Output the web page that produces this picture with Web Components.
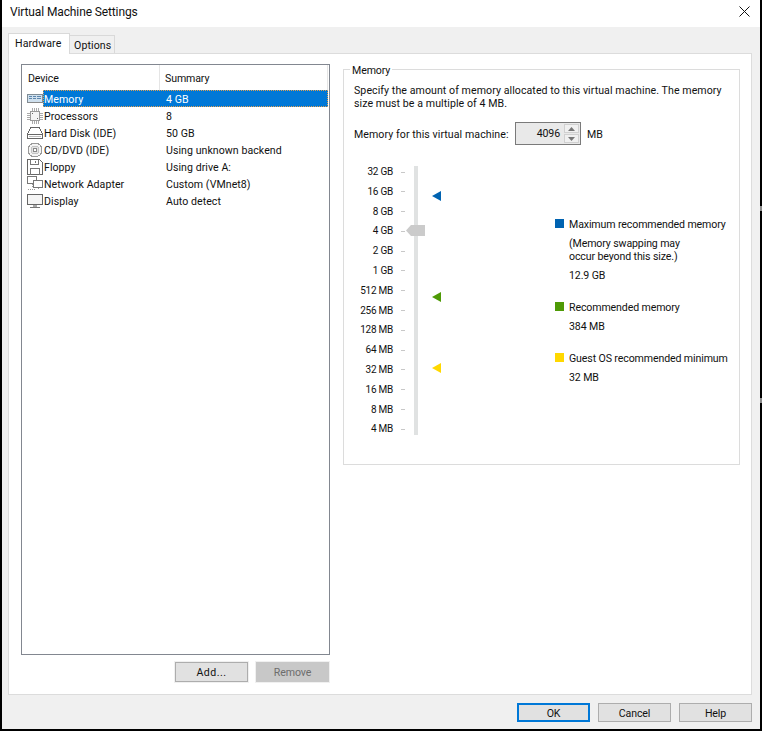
<!DOCTYPE html>
<html lang="en"><head><meta charset="utf-8"><title>Virtual Machine Settings</title>
<style>
html,body{margin:0;padding:0;background:#000;height:731px;overflow:hidden}
body{font:10.6px/13px Roboto,"Open Sans",sans-serif;letter-spacing:-.12px;color:#111;position:relative}
.edge{position:absolute;left:760px;width:2px;height:5px;background:#8a8a8a}
</style></head><body>
<vm-dialog>
  <dialog-tabs slot="tabs"></dialog-tabs>
  <device-pane slot="left"></device-pane>
  <memory-pane slot="right"></memory-pane>
</vm-dialog>
<div class="edge" style="top:206px"></div><div class="edge" style="top:398px"></div>
<script>
function el(name, css, html){
  customElements.define(name, class extends HTMLElement{
    constructor(){super();this.attachShadow({mode:'open'}).innerHTML='<style>'+css+'</style>'+html(this);}
  });
}
el('vm-btn',`
:host{display:block;box-sizing:border-box;width:73px;height:19px;background:#e1e1e1;border:1px solid #adadad;text-align:center;line-height:19px;color:#111}
:host([primary]){border:2px solid #0078d7;line-height:17px}
:host([tall]){height:20px;line-height:20px;outline:1px solid #f0f0f0;width:73px}
:host([wide]){letter-spacing:.5px}
:host([disabled]){background:#c8c8c8;border-color:#c8c8c8;color:#6d6d6d}
`,()=>'<slot></slot>');

el('vm-dialog',`
:host{display:flex;flex-direction:column;box-sizing:border-box;width:758px;height:729px;margin-left:2px;background:#f0f0f0}
.title{height:27px;background:#fff;display:flex;align-items:center;justify-content:space-between;padding:0 10px 2px 8px;box-sizing:border-box;font-size:12px}
.title svg{display:block;margin-top:-3px}
.tabs{height:26px;padding:6px 0 0 6px;box-sizing:border-box;display:flex}
.panel{box-sizing:border-box;width:744px;height:642px;margin-left:6px;background:#fff;border:1px solid #dcdcdc;padding:10px 10px 0 12px;display:flex;gap:13px}
.foot{display:flex;justify-content:flex-end;gap:8px;padding:8px 8px 0 0}
`,()=>`
<div class="title"><span>Virtual Machine Settings</span>
<svg width="11" height="11" viewBox="0 0 11 11"><path d="M.5.5l10 10M10.5.5l-10 10" stroke="#111" stroke-width="1" fill="none"/></svg></div>
<div class="tabs"><slot name="tabs"></slot></div>
<div class="panel"><slot name="left"></slot><slot name="right"></slot></div>
<div class="foot"><vm-btn primary>OK</vm-btn><vm-btn>Cancel</vm-btn><vm-btn>Help</vm-btn></div>`);

el('dialog-tabs',`
:host{display:flex;align-items:flex-end;height:20px;position:relative;z-index:1;letter-spacing:.1px}
.t{box-sizing:border-box;border:1px solid #d9d9d9;border-bottom:0}
.a{width:62px;height:21px;background:#fff;padding:3px 0 0 6px;margin-bottom:-1px}
.b{width:45px;height:18px;background:#f0f0f0;border-left:0;padding:3px 0 0 4px;}
`,()=>`<div class="t a">Hardware</div><div class="t b">Options</div>`);

const ICONS={
memory:`<rect x="0.5" y="3.5" width="15" height="8" fill="#cfe0ee" stroke="#7f8c96"/><path d="M2 5.5h3M6 5.5h3M10 5.5h4M2 7.5h3M6 7.5h3M10 7.5h4" stroke="#5d86ad"/><path d="M1 11.5h14" stroke="#888"/>`,
cpu:`<rect x="3.5" y="3.5" width="9" height="9" fill="#f4f4f4" stroke="#999"/><rect x="5" y="5" width="1" height="1" fill="#666"/><rect x="10" y="10" width="1" height="1" fill="#666"/><path d="M0 5h3M0 7h3M0 9h3M0 11h3M13 5h3M13 7h3M13 9h3M13 11h3M5 0v3M7 0v3M9 0v3M11 0v3M5 13v3M7 13v3M9 13v3M11 13v3" stroke="#aaa"/>`,
disk:`<path d="M3.5 2.5h9l3 7v4h-15v-4z" fill="#fff" stroke="#666"/><path d="M1 9.5h14" stroke="#666"/><rect x="2" y="11" width="12" height="1" fill="#bbb"/>`,
cd:`<circle cx="8" cy="8" r="7" fill="#f4f4f4" stroke="#999"/><circle cx="8" cy="8" r="4" fill="#e2e2e2" stroke="#c4c4c4"/><circle cx="8" cy="8" r="1.7" fill="#fff" stroke="#888"/>`,
floppy:`<path d="M.5.5h12l3 3v12H.5z" fill="#fff" stroke="#666"/><path d="M3.5.5v5h8v-5M3.5 15.5v-6h9v6" fill="none" stroke="#777"/><path d="M8.5 2v2" stroke="#777"/>`,
net:`<rect x="0.5" y="0.5" width="9" height="7" fill="#fff" stroke="#777"/><rect x="6.5" y="4.5" width="9" height="7" fill="#fff" stroke="#777"/><path d="M5 8v3M1 13.5h7M11 12v2" stroke="#999" stroke-dasharray="1 1"/>`,
disp:`<rect x="0.5" y="1.5" width="15" height="10" rx="1" fill="#f5f5f5" stroke="#666"/><path d="M3 14.5h10" stroke="#777"/><path d="M6 12h4v2H6z" fill="#aaa"/>`};

el('device-row',`
:host{display:flex;height:17px;position:relative;letter-spacing:.05px}
svg{width:16px;height:16px;flex:none;margin:0 0 0 5px;align-self:center}
.n{width:122px;flex:none;box-sizing:border-box}
.s{flex:1}
.w{display:flex;flex:1;margin-right:1px;box-sizing:border-box;border:1px dotted transparent;line-height:17px;height:17px}
:host([sel]) .w{background:#0078d7;color:#fff;border-color:#e2a050}
`,h=>`<svg viewBox="0 0 16 16" shape-rendering="crispEdges">${ICONS[h.getAttribute('icon')]}</svg>
<div class="w"><div class="n">${h.getAttribute('name')}</div><div class="s">${h.getAttribute('sum')}</div></div>`);

el('device-pane',`
:host{display:flex;flex-direction:column;width:309px}
.list{box-sizing:border-box;height:591px;border:1px solid #828790;background:#fff}
.head{display:flex;height:25px;line-height:27px}
.head div:first-child{width:138px;padding-left:6px;box-sizing:border-box;border-right:1px solid #e5e5e5}
.head div:last-child{padding-left:5px;flex:1;border-right:1px solid #e5e5e5;margin-right:1px}
.btns{display:flex;justify-content:flex-end;gap:8px;margin-top:7px;padding-right:1px}
`,()=>`<div class="list"><div class="head"><div>Device</div><div>Summary</div></div>
<device-row sel icon="memory" name="Memory" sum="4 GB"></device-row>
<device-row icon="cpu" name="Processors" sum="8"></device-row>
<device-row icon="disk" name="Hard Disk (IDE)" sum="50 GB"></device-row>
<device-row icon="cd" name="CD/DVD (IDE)" sum="Using unknown backend"></device-row>
<device-row icon="floppy" name="Floppy" sum="Using drive A:"></device-row>
<device-row icon="net" name="Network Adapter" sum="Custom (VMnet8)"></device-row>
<device-row icon="disp" name="Display" sum="Auto detect"></device-row>
</div>
<div class="btns"><vm-btn tall wide>Add...</vm-btn><vm-btn tall disabled>Remove</vm-btn></div>`);

el('memory-slider',`
:host{display:block;position:relative;width:198px;height:269px;flex:none}
.labels{display:flex;flex-direction:column;justify-content:space-between;height:257.5px;width:51px;text-align:right;font-size:10px;letter-spacing:-.25px}
.labels div{height:0;line-height:0;display:flex;justify-content:flex-end;align-items:center;gap:8px;white-space:nowrap}
.labels i{width:4px;height:1px;background:#c8c8c8;display:block;flex:none}
.track{position:absolute;left:60px;top:0;width:4px;height:269px;background:#e0e2e2}
.thumb{position:absolute;left:52px;top:59px}
.m{position:absolute;left:78px;display:block}
`,()=>{
  const l=['32 GB','16 GB','8 GB','4 GB','2 GB','1 GB','512 MB','256 MB','128 MB','64 MB','32 MB','16 MB','8 MB','4 MB'];
  const tri=(y,c)=>`<svg class="m" style="top:${y}px" width="9" height="10" viewBox="0 0 9 10"><path d="M0 5L9 0v10z" fill="${c}"/></svg>`;
  return `<div class="labels" style="padding-top:6px">${l.map(x=>`<div><span>${x}</span><i></i></div>`).join('')}</div>
  <div class="track"></div>
  <svg class="thumb" width="19" height="11" viewBox="0 0 19 11"><path d="M0 5.5L5 0h14v11H5z" fill="#cbcbcb"/></svg>
  ${tri(25,'#0063b1')}${tri(126,'#4e9a06')}${tri(197,'#ffd800')}`;
});

el('memory-pane',`
:host{display:block;width:397px;position:relative}
.group{box-sizing:border-box;height:396px;margin-top:5px;border:1px solid #dcdcdc;padding:14px 0 0 10px;position:relative}
.legend{position:absolute;left:6px;top:-6px;background:#fff;padding:0 2px;line-height:13px}
p{margin:0;line-height:13px;width:380px;letter-spacing:.07px;white-space:nowrap}
.row{display:flex;align-items:center;margin-top:12px;height:23px}
.lab{width:154px;white-space:nowrap;margin-top:2px;letter-spacing:.07px}
.mb{margin-top:2px}
.spin{box-sizing:border-box;display:flex;width:66px;height:23px;margin:0 6px 0 7px;background:#e9e9e9;border:1px solid #7a7a7a;justify-content:flex-end}
.spin b{font-weight:400;line-height:21px;padding:0 2px;flex:1;text-align:right;padding-right:4px}
.arrows{width:16px;display:flex;flex-direction:column;gap:1px;padding:1px 1px 1px 0;box-sizing:border-box}
.arrows span{flex:1;background:#f0f0f0;border:1px solid #d0d0d0;display:flex;align-items:center;justify-content:center}
.body{display:flex;margin-top:21px}
.lg{margin-left:3px;padding-top:51px;white-space:nowrap}
.item{display:flex;gap:5px}
.item span{display:block;margin-top:1px}
.sq{width:9px;height:9px;margin-top:2px;flex:none}
.sub{margin:6px 0 0 14px;line-height:13px}
.v{margin:6px 0 0 14px}
`,()=>`<div class="group"><div class="legend">Memory</div>
<p>Specify the amount of memory allocated to this virtual machine. The memory<br>size must be a multiple of 4 MB.</p>
<div class="row"><span class="lab">Memory for this virtual machine:</span><div class="spin"><b>4096</b><div class="arrows">
<span><svg width="7" height="4"><path d="M3.5 0L7 4H0z" fill="#777"/></svg></span><span><svg width="7" height="4"><path d="M3.5 4L7 0H0z" fill="#777"/></svg></span></div></div><span class="mb">MB</span></div>
<div class="body"><memory-slider></memory-slider>
<div class="lg">
<div class="item"><div class="sq" style="background:#0063b1"></div><span>Maximum recommended memory</span></div>
<div class="sub">(Memory swapping may<br>occur beyond this size.)</div><div class="v">12.9 GB</div>
<div class="item" style="margin-top:18px"><div class="sq" style="background:#4e9a06"></div><span>Recommended memory</span></div><div class="v">384 MB</div>
<div class="item" style="margin-top:18px"><div class="sq" style="background:#ffd800"></div><span>Guest OS recommended minimum</span></div><div class="v">32 MB</div>
</div></div></div>`);
</script>
</body></html>
